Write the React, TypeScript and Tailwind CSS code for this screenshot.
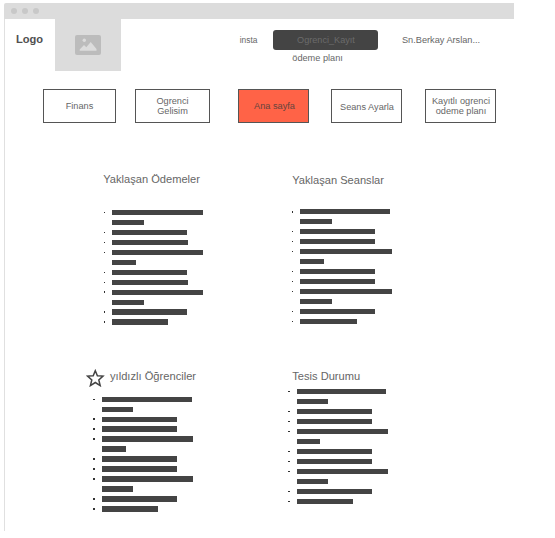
type Bars = number[];

// Indexes of the bars that continue the bullet above them.
const CONTINUATION = [1, 5, 9];

const PAYMENTS: Bars = [90.5, 31.5, 75, 75.7, 91.3, 24, 75, 75.7, 91.3, 31.5, 75, 56.3];
const SESSIONS: Bars = [90, 31.5, 74.3, 75, 91.3, 23.5, 74.3, 75, 91.3, 31.5, 74.3, 56.3];
const STUDENTS: Bars = [90.5, 31.3, 75, 75.7, 91.3, 24, 75, 75.7, 91.3, 31.3, 75, 56.3];
const FACILITY: Bars = [89.7, 31.3, 75, 75, 91.3, 23.3, 75, 75, 91.3, 31.3, 75, 56.3];

function BarList({ bars, className }: { bars: Bars; className: string }) {
  return (
    <ul className={className}>
      {bars.map((width, i) => (
        <li key={i} className="flex h-[9.98px] items-center">
          <span
            className={`mr-[7px] size-[1.5px] shrink-0 ${CONTINUATION.includes(i) ? "bg-transparent" : "bg-[#333]"}`}
          />
          <span className="h-[5.4px] shrink-0 bg-[#444]" style={{ width }} />
        </li>
      ))}
    </ul>
  );
}

function NavButton({ className, children }: { className: string; children: React.ReactNode }) {
  return (
    <button
      className={`flex h-[34px] shrink-0 items-center justify-center border border-[#555] text-center text-[9.2px] leading-[10px] ${className}`}
    >
      <span>{children}</span>
    </button>
  );
}

export default function App() {
  return (
    <div className="h-[538px] w-[555px] overflow-hidden bg-white pt-[3px] pl-1 font-['Liberation_Sans',Arial,sans-serif] text-[#666]">
      <div className="flex h-4 w-[510px] items-center gap-[5px] rounded-tl-[2px] bg-[#dcdcdc] pl-[7px]">
        <span className="size-[6px] rounded-full bg-[#c8c8c8]" />
        <span className="size-[6px] rounded-full bg-[#c8c8c8]" />
        <span className="size-[6px] rounded-full bg-[#c8c8c8]" />
      </div>

      <div className="h-[512px] w-[510px] border-l border-[#e0e0e0]">
        <header className="flex h-[52px] items-start">
          <div className="w-[50px] pt-[14px] pl-[11px] text-[11.1px] leading-[13px] font-bold text-[#505050]">Logo</div>
          <div className="flex h-[52px] w-[65.5px] items-center justify-center bg-[#dcdcdc]">
            <svg width="26" height="20" viewBox="0 0 26 20">
              <rect width="26" height="20" rx="2" fill="#bcbcbc" />
              <circle cx="9.3" cy="5.3" r="1.7" fill="#dcdcdc" />
              <path d="M4.7 15.7v-1.2L9 10l2.3 2.2L15.7 7l5.8 7v1.7z" fill="#dcdcdc" />
            </svg>
          </div>
          <div className="ml-[119.2px] w-[33.8px] pt-[16px] text-[8.4px] leading-[10px]">insta</div>
          <div className="w-[105px] pt-[11px]">
            <button className="flex h-5 w-[105px] items-center justify-center rounded-[3px] bg-[#444] pt-[2px] text-[9.15px] text-[#6b6b6b]">
              Ogrenci_Kayıt
            </button>
            <div className="pt-[3px] pl-[18.8px] text-[9.2px] leading-[10px]">ödeme planı</div>
          </div>
          <div className="ml-[23.5px] pt-[16px] text-[9.2px] leading-[10px] whitespace-nowrap">Sn.Berkay Arslan...</div>
        </header>

        <nav className="mt-[18px] flex pl-[38px]">
          <NavButton className="w-[73px]">Finans</NavButton>
          <NavButton className="ml-[19px] w-[75px]">
            Ogrenci
            <br />
            Gelisim
          </NavButton>
          <NavButton className="ml-[28px] w-[71px] bg-[#ff6347] pl-[2px] text-[#65443e]">Ana sayfa</NavButton>
          <NavButton className="ml-[22px] w-[71px] pt-[2px] pl-px">Seans Ayarla</NavButton>
          <NavButton className="ml-[23px] w-[71px] pl-px whitespace-nowrap">
            Kayıtlı ogrenci
            <br />
            odeme planı
          </NavButton>
        </nav>

        <main className="grid grid-cols-[188px_1fr] pl-[81px] text-[11.1px] leading-[14px]">
          <section className="h-[246px] pt-[49px]">
            <h2 className="pl-[17.3px]">Yaklaşan Ödemeler</h2>
            <BarList bars={PAYMENTS} className="mt-[21.5px] pl-[17.6px]" />
          </section>
          <section className="h-[246px] pt-[50px] pl-[18px]">
            <h2 className="pl-[0.3px]">Yaklaşan Seanslar</h2>
            <BarList bars={SESSIONS} className="-ml-[0.3px] mt-[19.8px]" />
          </section>
          <section>
            <div className="flex h-[19px] items-center">
              <svg className="-mt-[2px]" width="19" height="18" viewBox="0 0 19 18" fill="none" stroke="#444" strokeWidth="1.5">
                <path d="M9.3 1.7l2.1 5 5.6.4-4.2 3.8 1.4 5.7-4.9-3.1-4.9 3.1 1.4-5.7L1.6 7.1l5.6-.4z" />
              </svg>
              <h2 className="-mt-[5px] pl-[5px] text-[11.15px]">yıldızlı Öğrenciler</h2>
            </div>
            <BarList bars={STUDENTS} className="mt-[6.3px] pl-[7.2px]" />
          </section>
          <section>
            <h2 className="pl-[18.3px]">Tesis Durumu</h2>
            <BarList bars={FACILITY} className="mt-[3.7px] pl-[14px]" />
          </section>
        </main>
      </div>
    </div>
  );
}
